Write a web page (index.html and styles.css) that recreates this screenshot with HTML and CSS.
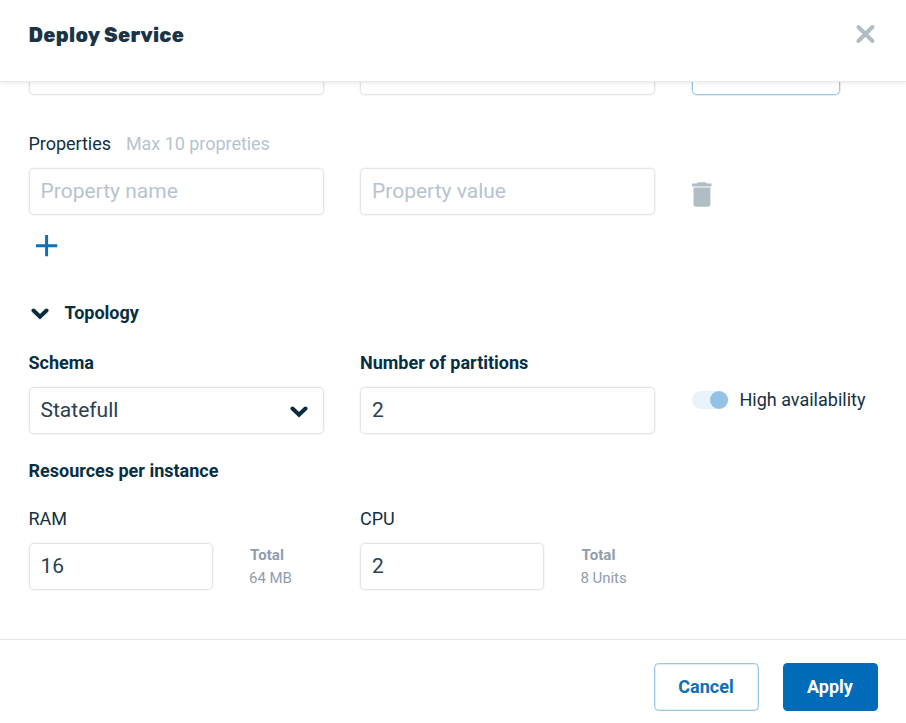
FILE: index.html
```html
<!DOCTYPE html>
<html lang="en">
<head>
<meta charset="utf-8">
<title>Deploy Service</title>
<link rel="stylesheet" href="styles.css">
</head>
<body>
<div class="dialog">
  <header class="header">
    <h1 class="title"><span>Deploy Service</span></h1>
    <svg class="close" width="22" height="22" viewBox="0 0 22 22"><path d="M4.4 4L18.4 18M18.4 4L4.4 18"/></svg>
  </header>
  <main class="content">
    <div class="row previous">
      <div class="field"></div>
      <div class="field"></div>
      <div class="field outline"></div>
    </div>
    <div class="labels properties"><span>Properties</span><span class="hint">Max 10 propreties</span></div>
    <div class="row">
      <div class="field placeholder"><span>Property name</span></div>
      <div class="field placeholder"><span>Property value</span></div>
      <svg class="trash" width="20" height="26" viewBox="0 0 20 26"><path d="M0 1.8Q0 1.4.5 1.4H4.7Q5.5 .2 6.7 .2H13Q14.3 .2 15 1.4H19.5V4.4H0ZM1.5 5.6H18.4V22Q18.4 24.8 15.8 24.8H4.2Q1.5 24.8 1.5 22Z"/></svg>
    </div>
    <svg class="plus" width="22" height="22" viewBox="0 0 22 22"><path d="M0 10.7H21.2M10.6 0V21.2"/></svg>
    <div class="section">
      <svg class="chevron" width="18" height="12" viewBox="0 0 18 12"><path d="M2.5 2.5L9 8.8L15.5 2.5"/></svg>
      <h2 class="bold">Topology</h2>
    </div>
    <div class="row labels bold"><span>Schema</span><span>Number of partitions</span></div>
    <div class="row">
      <div class="field select"><span>Statefull</span><svg class="chevron" width="18" height="12" viewBox="0 0 18 12"><path d="M2.5 2.5L9 8.8L15.5 2.5"/></svg></div>
      <div class="field"><span>2</span></div>
      <div class="availability"><span class="switch"><span class="knob"></span></span><span>High availability</span></div>
    </div>
    <h3 class="bold resources">Resources per instance</h3>
    <div class="row labels"><span>RAM</span><span>CPU</span></div>
    <div class="row">
      <div class="resource">
        <div class="field"><span>16</span></div>
        <div class="total"><strong>Total</strong><span>64 MB</span></div>
      </div>
      <div class="resource">
        <div class="field"><span>2</span></div>
        <div class="total"><strong>Total</strong><span>8 Units</span></div>
      </div>
    </div>
  </main>
  <footer class="footer">
    <button class="button cancel">Cancel</button>
    <button class="button apply">Apply</button>
  </footer>
</div>
</body>
</html>
```
FILE: styles.css
```css
* { box-sizing: border-box; }
body { margin: 0; background: #fff; color: #14303f; font: 18px/24px Roboto, sans-serif; }
h1, h2, h3 { margin: 0; font-size: inherit; }
svg { display: block; flex: none; }
.dialog { height: 723px; display: flex; flex-direction: column; overflow: hidden; }
.header { height: 82px; flex: none; display: flex; justify-content: space-between; padding: 23px 30px 0 28.5px; border-bottom: 1px solid #e9e9e9; box-shadow: 0 1px 5px #00000018; z-index: 1; background: #fff; }
.title { font: 800 20px/24px Rubik, Inter, sans-serif; letter-spacing: .28px; color: #1b3445; }
.close { stroke: #b1bdc4; stroke-width: 4; stroke-linecap: round; fill: none; }
.content { flex: none; height: 557px; padding-left: 28.5px; overflow: hidden; }
.row { display: grid; grid-template-columns: 295px 295px 1fr; column-gap: 36.5px; }
.field { height: 47px; display: flex; align-items: center; padding: 0 11px 2px; border: 1px solid #e1e5e8; box-shadow: 0 0 0 .5px #e1e5e899; border-radius: 4.5px; font-size: 21px; color: #2b4050; }
.previous { margin-top: -34px; }
.outline { width: 148px; border-color: #9bc5e4; box-shadow: 0 0 0 .5px #9bc5e499; }
.labels { height: 24px; margin-bottom: 12px; }
.properties { margin-top: 37px; display: flex; gap: 15px; letter-spacing: -.04px; }
.hint, .placeholder { color: #b7c4d0; }
.trash { margin: 14px 0 7px; fill: #b1bdc4; }
.plus { margin: 20px 0 0 7.5px; stroke: #0b70b6; stroke-width: 3; }
.section { display: flex; align-items: center; gap: 16px; margin: 44px 0 26px 2px; height: 24px; }
.chevron { fill: none; stroke: #0b2c3d; stroke-width: 4; stroke-linecap: round; }
.section .chevron { margin-top: 1px; }
.bold { font-size: 18px; font-weight: 700; color: #072f43; }
.select { justify-content: space-between; padding-right: 15px; }
.select .chevron { margin-top: 4px; }
.availability { display: flex; align-items: center; gap: 12px; height: 26px; }
.switch { width: 36px; height: 18px; border-radius: 9px; background: #e8f2fa; display: flex; justify-content: flex-end; }
.knob { width: 18px; height: 18px; border-radius: 50%; background: #93c2e6; }
.resources { margin: 25px 0 24px; height: 24px; }
.resource { display: flex; gap: 36.5px; }
.resource .field { width: 184px; }
.total { display: flex; flex-direction: column; font-size: 15px; line-height: 23px; color: #8f9dad; padding-top: 1px; letter-spacing: -.05px; }
.total strong { padding-left: 1px; letter-spacing: .1px; }
.footer { flex: 1; border-top: 1px solid #e6e6e6; display: flex; justify-content: flex-end; gap: 24px; padding: 23px 28.5px 0 0; }
.button { height: 48px; border-radius: 4.5px; font: 700 18px/24px Roboto, sans-serif; padding: 0; }
.cancel { width: 105px; background: #fff; border: 1px solid #9bc5e4; box-shadow: inset 0 0 0 .5px #9bc5e499; color: #0b70b6; }
.apply { width: 95px; background: #006bb8; border: 0; color: #fff; }
```
